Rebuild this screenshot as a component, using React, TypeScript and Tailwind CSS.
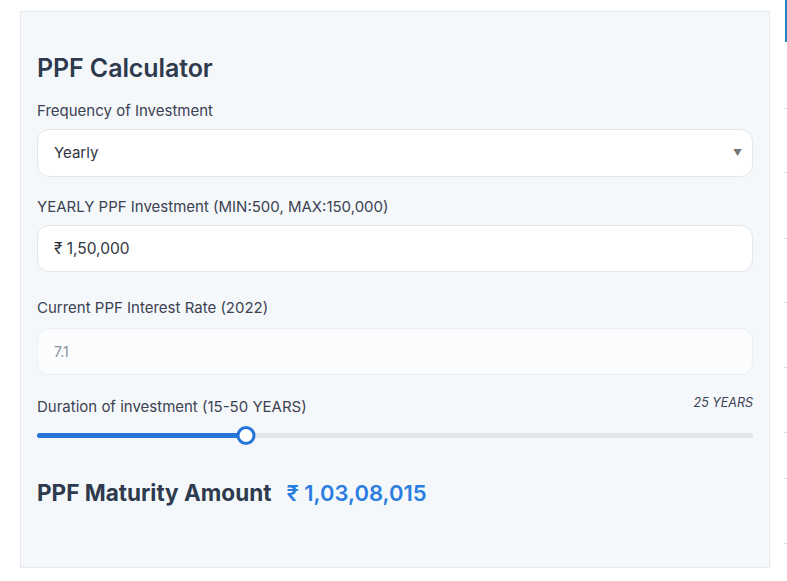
import { useState } from 'react';

const TICKS = [108, 172, 238, 302, 367, 432, 478, 543];

export default function App() {
  const [years, setYears] = useState(25);
  const frac = (years - 15) / (50 - 15);
  // range thumb is kept inside the track, like a native input
  const thumbLeft = `calc(${frac} * (100% - 19px) + 9.5px)`;

  return (
    <div
      className="relative h-[581px] w-[787px] overflow-hidden bg-white text-[#2d3748]"
      style={{ fontFamily: 'Inter, "Noto Sans", sans-serif' }}
    >
      {/* right-side page strip */}
      <div className="absolute right-0 top-0 h-[42px] w-[2px] bg-[#1d87c4]" />
      {TICKS.map((t) => (
        <div key={t} className="absolute right-0 h-px w-[3px] bg-[#d9dde3]" style={{ top: t }} />
      ))}

      <div className="ml-[20px] mt-[11px] h-[557px] w-[750px] border border-[#e6e9ee] bg-[#f5f8fb] px-[16px] pt-[41px]">
        <h2 className="text-[25px] font-semibold leading-[30px] tracking-[-0.1px] text-[#2e3a4d]">
          PPF Calculator
        </h2>

        <label className="mt-[18px] block text-[15px] leading-[20px] text-[#3b4252]">
          Frequency of Investment
        </label>
        <div className="mt-[8px] flex h-[48px] items-center justify-between rounded-[12px] border border-[#e3e6ea] bg-white pl-[16px] pr-[10px]">
          <span className="text-[15px] text-[#2e3440]">Yearly</span>
          <span className="text-[9px] text-[#777]">▼</span>
        </div>

        <label className="mt-[20px] block text-[15px] leading-[20px] text-[#3b4252]">
          YEARLY PPF Investment (MIN:500, MAX:150,000)
        </label>
        <div className="mt-[8px] flex h-[47px] items-center rounded-[12px] border border-[#e3e6ea] bg-white pl-[16px]">
          <span className="text-[15.5px] text-[#2e3440]">₹ 1,50,000</span>
        </div>

        <label className="mt-[26px] block text-[15px] leading-[20px] text-[#3b4252]">
          Current PPF Interest Rate (2022)
        </label>
        <div className="mt-[10px] flex h-[47px] items-center rounded-[12px] border border-[#eceef1] bg-[#fbfcfd] pl-[16px]">
          <span className="text-[14px] text-[#8a8f98]">7.1</span>
        </div>

        <div className="mt-[19px] flex items-start justify-between">
          <label className="mt-[3px] block text-[15px] leading-[20px] text-[#3b4252]">
            Duration of investment (15-50 YEARS)
          </label>
          <span className="mt-[1px] text-[12.5px] italic leading-[16px] text-[#3b4252]">{years} YEARS</span>
        </div>

        <div className="relative mt-[8px] h-[20px]">
          <div className="absolute left-0 right-0 top-[8px] h-[5px] rounded-full bg-[#e2e5ea]" />
          <div
            className="absolute left-0 top-[8px] h-[5px] rounded-full bg-[#2574d9]"
            style={{ width: thumbLeft }}
          />
          <div
            className="absolute top-[1px] h-[19px] w-[19px] -translate-x-1/2 rounded-full border-[3px] border-[#2574d9] bg-white"
            style={{ left: thumbLeft }}
          />
          <input
            type="range"
            min={15}
            max={50}
            value={years}
            onChange={(e) => setYears(Number(e.target.value))}
            className="absolute inset-0 h-full w-full cursor-pointer opacity-0"
          />
        </div>

        <div className="mt-[31px] flex items-baseline gap-[15px]">
          <span className="text-[22.5px] font-bold text-[#2e3a4d]">PPF Maturity Amount</span>
          <span className="text-[22px] font-semibold text-[#2b7de0]">₹ 1,03,08,015</span>
        </div>
      </div>
    </div>
  );
}
